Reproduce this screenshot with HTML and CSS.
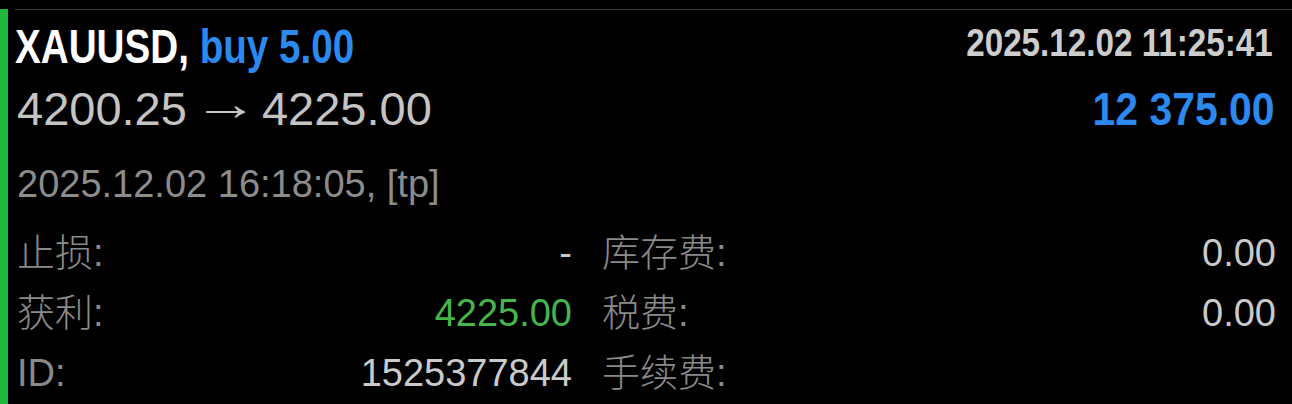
FILE: index.html
```html
<!DOCTYPE html>
<html>
    <head>
        <meta http-equiv="Content-Type" content="text/html; charset=utf-8">
        <title>XAUUSD</title>
        <link rel="stylesheet" href="styles.css">
    </head>
    <body>
        <div class="trade">
            <div class="bar"></div>
            <div class="card">
                <div class="head">
                    <div class="row first">
                        <span class="symbol">XAUUSD, <span class="side">buy 5.00</span></span>
                        <span class="opened">2025.12.02 11:25:41</span>
                    </div>
                    <div class="row second">
                        <span class="prices">4200.25<span class="arrow">→</span>4225.00</span>
                        <span class="profit">12 375.00</span>
                    </div>
                </div>

                <div class="closed">2025.12.02 16:18:05, [tp]</div>

                <div class="details">
                    <div class="cell"><span class="label">止损:</span><span class="value">-</span></div>
                    <div class="cell"><span class="label">库存费:</span><span class="value">0.00</span></div>
                    <div class="cell"><span class="label">获利:</span><span class="value tp">4225.00</span></div>
                    <div class="cell"><span class="label">税费:</span><span class="value">0.00</span></div>
                    <div class="cell"><span class="label">ID:</span><span class="value">1525377844</span></div>
                    <div class="cell"><span class="label">手续费:</span><span class="value"></span></div>
                </div>
            </div>
        </div>
    </body>
</html>
```

FILE: styles.css
```css
body {
    margin: 0;
    background: #000;
    font-family: "Liberation Sans", "Noto Sans CJK SC", sans-serif;
    height: 404px;
    overflow: hidden;
}

.trade {
    display: flex;
    margin-top: 9px;
    height: 395px;
}

.bar {
    width: 8px;
    background: #1fb83b;
}

.card {
    flex: 1;
    margin-left: 7px;
    border-top: 1px solid #3a3a3a;
    padding: 9px 16px 0 2px;
}

.row {
    display: flex;
    justify-content: space-between;
}

.first {
    align-items: flex-start;
    line-height: 56px;
}

/* no condensed face installed, so the bold bits get squeezed */
.symbol,
.opened,
.profit {
    display: inline-block;
    font-weight: bold;
    white-space: nowrap;
}

.symbol {
    margin-left: -2px;
    font-size: 48px;
    color: #fff;
    transform: scaleX(.805);
    transform-origin: left;
}

.side {
    color: #2b89ef;
}

.opened {
    margin-right: 3px;
    font-size: 38px;
    line-height: 48px;
    color: #cdcdcd;
    transform: scaleX(.874);
    transform-origin: right;
}

.second {
    align-items: baseline;
    line-height: 68px;
}

.prices {
    font-size: 47px;
    color: #c4c4c4;
}

.arrow {
    display: inline-block;
    margin: 0 13px 0 15px;
    transform: translateY(-5px) scaleX(1.4);
}

.profit {
    margin-right: 1px;
    font-size: 46px;
    color: #2b89ef;
    transform: scaleX(.89);
    transform-origin: right;
}

.closed {
    margin-top: 20px;
    font-size: 38px;
    line-height: 42px;
    color: #8c8c8c;
}

.details {
    display: grid;
    grid-template-columns: 555px 1fr;
    column-gap: 30px;
    margin-top: 18px;
}

.cell {
    display: flex;
    justify-content: space-between;
    font-size: 38px;
    line-height: 60px;
}

.label {
    font-weight: 300;
    color: #8a8a8a;
}

.value {
    color: #cacaca;
}

.value.tp {
    color: #45b54c;
}
```
